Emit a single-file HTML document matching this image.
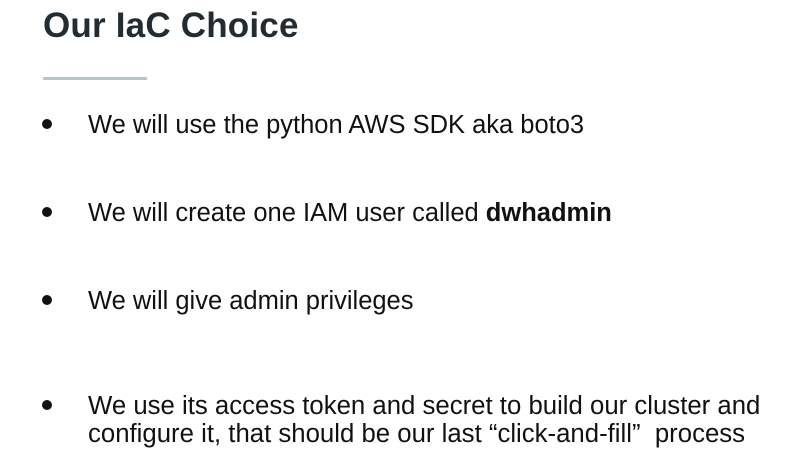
<!DOCTYPE html>
<html><head><style>
body{margin:0;width:792px;height:461px;background:#fff;position:relative;overflow:hidden;font-family:"Liberation Sans",sans-serif;color:#111}
.t{position:absolute;left:43px;top:6px;font-size:35px;font-weight:bold;color:#222c33;letter-spacing:0.2px}
.u{position:absolute;left:43px;top:77px;width:104px;height:3px;background:#b8c4cc}
.b{position:absolute;left:42px;width:10px;height:10px;border-radius:50%;background:#111}
.l{position:absolute;left:88px;font-size:25.5px;white-space:nowrap;line-height:28px;transform-origin:0 0}
</style></head><body>
<div class="t">Our IaC Choice</div>
<div class="u"></div>
<div class="b" style="top:119px"></div>
<div class="l" style="top:111px">We will use the python AWS SDK aka boto3</div>
<div class="b" style="top:207px"></div>
<div class="l" style="top:199px">We will create one IAM user called <b>dwhadmin</b></div>
<div class="b" style="top:295px"></div>
<div class="l" style="top:287px">We will give admin privileges</div>
<div class="b" style="top:400px"></div>
<div class="l" style="top:392px;transform:scaleX(1.01)">We use its access token and secret to build our cluster and<br>configure it, that should be our last “click-and-fill”&nbsp; process</div>
</body></html>
